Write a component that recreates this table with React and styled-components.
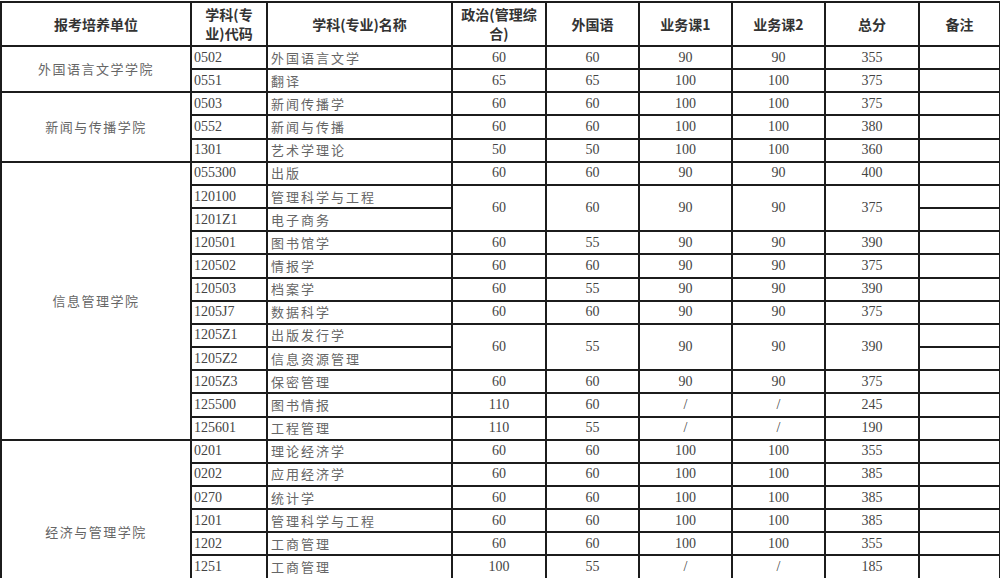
import React from 'react';
import styled, { createGlobalStyle } from 'styled-components';

const GlobalStyle = createGlobalStyle`
  html, body {
    margin: 0;
    padding: 0;
    background: #fff;
  }
`;

const Sheet = styled.table`
  margin-top: 1px;
  width: 999px;
  border-collapse: collapse;
  table-layout: fixed;
  font-family: 'Liberation Serif', serif;
  color: #444;
`;

const Head = styled.th`
  height: 42px;
  border: 2px solid #1c1c1c;
  padding: 0 4px;
  font-family: 'Noto Sans CJK SC', sans-serif;
  font-weight: 700;
  font-size: 14px;
  line-height: 19px;
  color: #333;
  text-align: center;
  vertical-align: middle;
`;

const Row = styled.tr`
  height: 23.17px;
`;

const Cell = styled.td`
  border: 2px solid #1c1c1c;
  padding: 0 ${p => (p.$align === 'left' ? '2px' : '0')};
  font-size: 14px;
  line-height: 18px;
  text-align: ${p => p.$align || 'center'};
  vertical-align: middle;
  white-space: nowrap;
  overflow: hidden;
`;

const College = styled(Cell)`
  padding-top: ${p => p.$drop || 0}px;
  font-family: 'Noto Sans CJK SC', sans-serif;
  font-size: 13px;
  letter-spacing: 1.5px;
  color: #666;
`;

const Name = styled(Cell)`
  padding-left: 3px;
  font-family: 'Noto Sans CJK SC', sans-serif;
  font-size: 13px;
  letter-spacing: 2px;
  color: #666;
`;

const widths = [190, 76, 185, 94, 93, 93, 93, 94, 81];

// [code, name, politics, language, course1, course2, total]
// 'span': scores merged across this row and the next
const groups = [
  {
    college: '外国语言文学学院',
    rows: [
      ['0502', '外国语言文学', 60, 60, 90, 90, 355],
      ['0551', '翻译', 65, 65, 100, 100, 375],
    ],
  },
  {
    college: '新闻与传播学院',
    rows: [
      ['0503', '新闻传播学', 60, 60, 100, 100, 375],
      ['0552', '新闻与传播', 60, 60, 100, 100, 380],
      ['1301', '艺术学理论', 50, 50, 100, 100, 360],
    ],
  },
  {
    college: '信息管理学院',
    rows: [
      ['055300', '出版', 60, 60, 90, 90, 400],
      ['120100', '管理科学与工程', 60, 60, 90, 90, 375, 'span'],
      ['1201Z1', '电子商务', null],
      ['120501', '图书馆学', 60, 55, 90, 90, 390],
      ['120502', '情报学', 60, 60, 90, 90, 375],
      ['120503', '档案学', 60, 55, 90, 90, 390],
      ['1205J7', '数据科学', 60, 60, 90, 90, 375],
      ['1205Z1', '出版发行学', 60, 55, 90, 90, 390, 'span'],
      ['1205Z2', '信息资源管理', null],
      ['1205Z3', '保密管理', 60, 60, 90, 90, 375],
      ['125500', '图书情报', 110, 60, '/', '/', 245],
      ['125601', '工程管理', 110, 55, '/', '/', 190],
    ],
  },
  {
    college: '经济与管理学院',
    drop: 46,
    rows: [
      ['0201', '理论经济学', 60, 60, 100, 100, 355],
      ['0202', '应用经济学', 60, 60, 100, 100, 385],
      ['0270', '统计学', 60, 60, 100, 100, 385],
      ['1201', '管理科学与工程', 60, 60, 100, 100, 385],
      ['1202', '工商管理', 60, 60, 100, 100, 355],
      ['1251', '工商管理', 100, 55, '/', '/', 185],
    ],
  },
];

const App = () => (
  <>
    <GlobalStyle />
    <Sheet>
      <colgroup>
        {widths.map((w, i) => (
          <col key={i} style={{ width: w }} />
        ))}
      </colgroup>
      <thead>
        <tr>
          <Head>报考培养单位</Head>
          <Head>学科(专<br />业)代码</Head>
          <Head>学科(专业)名称</Head>
          <Head>政治(管理综<br />合)</Head>
          <Head>外国语</Head>
          <Head>业务课1</Head>
          <Head>业务课2</Head>
          <Head>总分</Head>
          <Head>备注</Head>
        </tr>
      </thead>
      <tbody>
        {groups.map(group =>
          group.rows.map((row, i) => {
            const [code, name, ...scores] = row;
            const merged = scores[5] === 'span';
            return (
              <Row key={code}>
                {i === 0 && (
                  <College rowSpan={group.rows.length} $drop={group.drop}>
                    {group.college}
                  </College>
                )}
                <Cell $align="left">{code}</Cell>
                <Name $align="left">{name}</Name>
                {scores[0] !== null &&
                  scores.slice(0, 5).map((s, j) => (
                    <Cell key={j} rowSpan={merged ? 2 : 1}>
                      {s}
                    </Cell>
                  ))}
                <Cell />
              </Row>
            );
          })
        )}
      </tbody>
    </Sheet>
  </>
);

export default App;
